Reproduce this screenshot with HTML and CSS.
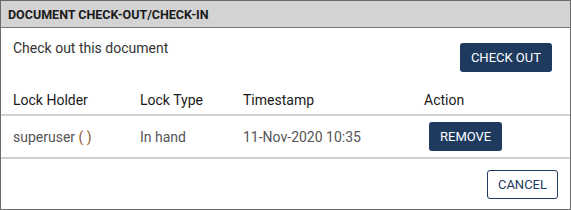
FILE: index.html
```html
<!DOCTYPE html>
<html lang="en">
<head>
    <meta charset="UTF-8">
    <title>Document Check-out/Check-in</title>
    <link rel="stylesheet" href="styles.css">
</head>
<body>
    <div class="dialog">
        <div class="dialog-header">Document Check-out/Check-in</div>

        <div class="dialog-body">
            <div class="intro">
                <span>Check out this document</span>
                <button class="btn btn-primary intro-btn">Check out</button>
            </div>

            <table class="locks">
                <thead>
                    <tr>
                        <th class="col-holder">Lock Holder</th>
                        <th class="col-type">Lock Type</th>
                        <th class="col-time">Timestamp</th>
                        <th>Action</th>
                    </tr>
                </thead>
                <tbody>
                    <tr>
                        <td class="col-holder">superuser <span class="paren">( )</span></td>
                        <td class="col-type">In hand</td>
                        <td class="col-time">11-Nov-2020 10:35</td>
                        <td><button class="btn btn-primary remove-btn">Remove</button></td>
                    </tr>
                </tbody>
            </table>
        </div>

        <div class="dialog-footer">
            <button class="btn btn-outline">Cancel</button>
        </div>
    </div>
</body>
</html>
```

FILE: styles.css
```css
* {
    box-sizing: border-box;
    margin: 0;
    padding: 0;
}

body {
    font-family: Roboto, "Liberation Sans", Arial, sans-serif;
    background-color: #fff;
    color: #333;
}

/* Dialog frame */
.dialog {
    width: 571px;
    height: 210px;
    border: 1px solid #6b6b6b;
    display: flex;
    flex-direction: column;
}

.dialog-header {
    height: 28px;
    background-color: #d3d3d3;
    border-bottom: 1px solid #777;
    padding: 0 7px;
    display: flex;
    align-items: center;
    font-size: 12.5px;
    font-weight: bold;
    text-transform: uppercase;
    color: #1a1a1a;
}

.dialog-body {
    flex: 1;
}

.intro {
    display: flex;
    justify-content: space-between;
    align-items: flex-start;
    padding: 10px 18px 0 12px;
    font-size: 14px;
    line-height: 20px;
    color: #333;
}

.intro-btn {
    margin-top: 5px;
}

/* Buttons */
.btn {
    font-family: inherit;
    font-size: 13px;
    text-transform: uppercase;
    height: 29px;
    padding: 0 11px;
    border-radius: 3px;
    cursor: pointer;
}

.btn-primary {
    background-color: #1e3a5f;
    color: #fff;
    border: none;
}

.btn-outline {
    background-color: #fff;
    color: #1e3a5f;
    border: 1px solid #1e3a5f;
    padding: 0 10px;
}

/* Lock table */
.locks {
    width: 100%;
    border-collapse: collapse;
    margin-top: 13px;
    font-size: 14px;
    line-height: 20px;
    text-align: left;
}

.locks th {
    font-weight: normal;
    color: #1a1a1a;
    padding: 5px 0 4px;
    border-bottom: 2px solid #d0d0d0;
}

.locks td {
    color: #555;
    padding: 6px 0;
    border-bottom: 2px solid #d0d0d0;
}

.locks .col-holder {
    width: 139px;
    padding-left: 12px;
}

.locks .col-type {
    width: 103px;
}

.locks .col-time {
    width: 181px;
}

.paren {
    color: #8a5a2e;
}

.remove-btn {
    margin-left: 5px;
    display: block;
}

.dialog-footer {
    height: 51px;
    display: flex;
    justify-content: flex-end;
    align-items: center;
    padding-right: 12px;
}
```
